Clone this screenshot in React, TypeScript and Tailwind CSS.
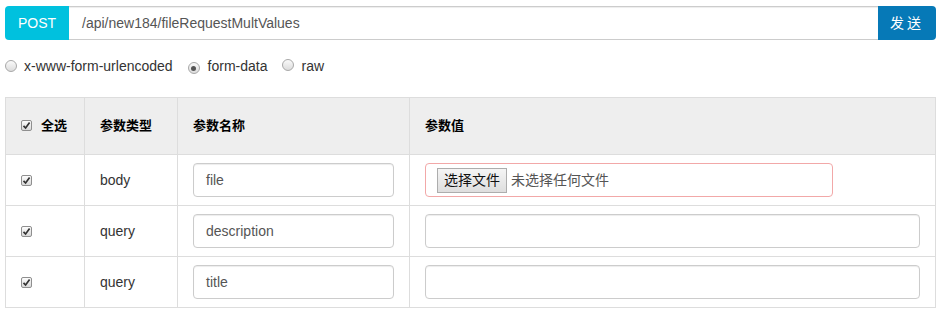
import React from 'react';

function Check({ checked = true }: { checked?: boolean }) {
  return (
    <span className="inline-flex h-[11px] w-[11px] items-center justify-center rounded-[2px] border border-[#8f8f8f] bg-gradient-to-b from-[#fdfdfd] to-[#d9d9d9] align-middle">
      {checked && (
        <svg width="9" height="9" viewBox="0 0 9 9">
          <path d="M1.5 4.8 L3.6 7 L7.6 1.6" fill="none" stroke="#333" strokeWidth="1.7" />
        </svg>
      )}
    </span>
  );
}

function Radio({ checked = false }: { checked?: boolean }) {
  return (
    <span className="inline-flex h-[12px] w-[12px] items-center justify-center rounded-full border border-[#a8a8a8] bg-gradient-to-b from-[#fafafa] to-[#dcdcdc]">
      {checked && <span className="h-[5px] w-[5px] rounded-full bg-[#555]" />}
    </span>
  );
}

const rows = [
  { type: 'body', name: 'file', file: true },
  { type: 'query', name: 'description', file: false },
  { type: 'query', name: 'title', file: false },
];

export default function App() {
  return (
    <div className="w-[941px] h-[321px] bg-white px-[5px] pt-[6px] text-[14px] text-[#333] font-['Liberation_Sans','Noto_Sans_CJK_SC',sans-serif]">
      {/* 请求地址 */}
      <div className="flex h-[34px]">
        <div className="flex w-[64px] items-center justify-center rounded-l-[4px] bg-[#00c1de] text-white">POST</div>
        <div className="flex flex-1 items-center border-y border-[#ccc] px-[13px] text-[#555] shadow-[inset_0_1px_1px_rgba(0,0,0,0.075)]">
          /api/new184/fileRequestMultValues
        </div>
        <button className="w-[58px] rounded-r-[4px] bg-[#0679b7] text-white tracking-[3px]">发送</button>
      </div>

      {/* 编码方式 */}
      <div className="mt-[18px] flex h-[16px] items-center">
        <Radio />
        <span className="ml-[7px]">x-www-form-urlencoded</span>
        <span className="ml-[15px]"><Radio checked /></span>
        <span className="ml-[8px]">form-data</span>
        <span className="ml-[14px]"><Radio /></span>
        <span className="ml-[8px]">raw</span>
      </div>

      {/* 参数表 */}
      <table className="mt-[23px] w-[931px] table-fixed border-collapse">
        <colgroup>
          <col className="w-[79px]" />
          <col className="w-[93px]" />
          <col className="w-[232px]" />
          <col />
        </colgroup>
        <thead>
          <tr className="h-[57px] bg-[#eee] text-[13px] font-bold text-black">
            <th className="border border-[#ddd] pl-[15px] text-left">
              <span className="inline-flex items-center gap-[9px]">
                <Check />
                <span>全选</span>
              </span>
            </th>
            <th className="border border-[#ddd] pl-[15px] text-left">参数类型</th>
            <th className="border border-[#ddd] pl-[15px] text-left">参数名称</th>
            <th className="border border-[#ddd] pl-[15px] text-left">参数值</th>
          </tr>
        </thead>
        <tbody>
          {rows.map((r, i) => (
            <tr key={i} className="h-[51px]">
              <td className="border border-[#ddd] pl-[15px]">
                <span className="flex"><Check /></span>
              </td>
              <td className="border border-[#ddd] pl-[15px]">{r.type}</td>
              <td className="border border-[#ddd] pl-[15px]">
                <div className="flex h-[34px] w-[201px] items-center rounded-[4px] border border-[#ccc] px-[12px] text-[#555] shadow-[inset_0_1px_1px_rgba(0,0,0,0.075)]">
                  {r.name}
                </div>
              </td>
              <td className="border border-[#ddd] pl-[15px]">
                {r.file ? (
                  <div className="flex h-[34px] w-[408px] items-center rounded-[4px] border border-[#f2a8a8] pl-[11px]">
                    <span className="flex h-[25px] items-center border border-[#adadad] bg-gradient-to-b from-[#f5f5f5] to-[#dedede] px-[6px] text-[#111]">
                      选择文件
                    </span>
                    <span className="ml-[4px] text-[#555]">未选择任何文件</span>
                  </div>
                ) : (
                  <div className="h-[34px] w-[495px] rounded-[4px] border border-[#ccc] shadow-[inset_0_1px_1px_rgba(0,0,0,0.075)]" />
                )}
              </td>
            </tr>
          ))}
        </tbody>
      </table>
    </div>
  );
}
